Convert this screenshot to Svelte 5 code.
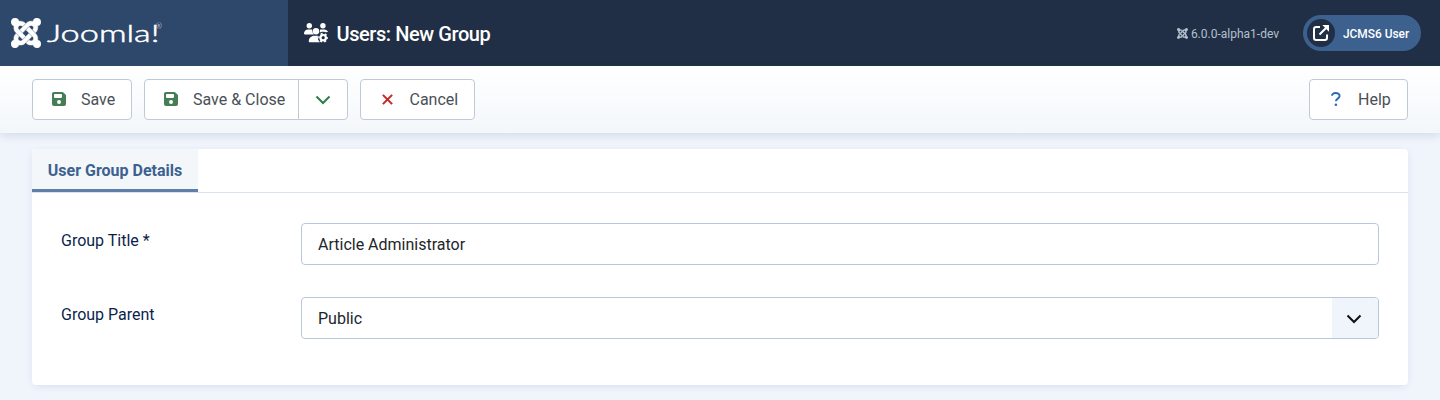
<script>
  const joomla =
    'M.6 92.1C.6 58.8 27.4 32 60.4 32c30 0 54.5 21.9 59.2 50.2 32.6-7.6 67.1.6 96.5 30l-44.3 44.3c-20.5-20.5-42.6-16.3-55.4-3.5-14.3 14.3-14.3 37.9 0 52.2l99.5 99.5-44 44.3c-87.7-87.2-49.7-49.7-99.8-99.7-26.8-26.5-35-64.8-24.8-98.9C20.4 144.6.6 120.7.6 92.1zm129.5 116.4l44.3 44.3c10-10 89.7-89.7 99.7-99.8 14.3-14.3 37.6-14.3 51.9 0 12.8 12.8 17 35-3.5 55.4l44 44.3c31.2-31.2 38.5-67.6 28.9-101.2 29.2-4.1 51.9-29.2 51.9-59.5 0-33.2-26.8-60.1-59.8-60.1-30.3 0-55.4 22.5-59.5 51.6-33.8-9.9-71.7-1.5-98.3 25.1-18.3 19.1-71.1 71.5-99.6 99.9zm266.3 152.2c8.2-32.7-.9-68.5-26.3-93.9-11.8-12.2 5 4.7-99.5-99.7l-44.3 44.3 99.7 99.7c14.3 14.3 14.3 37.6 0 51.9-12.8 12.8-35 17-55.4-3.5l-44 44.3c27.6 30.2 68 38.8 102.7 28 5.5 27.4 29.7 48.1 58.9 48.1 33 0 59.8-26.8 59.8-60.1 0-30.2-22.5-55-51.6-59.1zm-84.3-53.1l-44-44.3c-87 86.4-50.4 50.4-99.7 99.8-14.3 14.3-37.6 14.3-51.9 0-13.1-13.4-16.9-35.3 3.2-55.4l-44-44.3c-30.2 30.2-38 65.2-29.5 98.3-26.7 6-46.2 29.9-46.2 58.2C0 453.2 26.8 480 59.8 480c28.6 0 52.5-19.8 58.6-46.7 32.7 8.2 68.5-.6 94.2-26 32.1-32 12.2-12.4 99.5-99.7z';
  let title = $state('Article Administrator');
</script>

{#snippet saveIcon()}
  <svg class="save" viewBox="0 0 14 14" aria-hidden="true">
    <path fill-rule="evenodd" d="M2 0h8.2c.5 0 .9.2 1.2.5l2.1 2.1c.3.3.5.7.5 1.2V12a2 2 0 0 1-2 2H2a2 2 0 0 1-2-2V2c0-1.100.9-2 2-2zm.9 2a.9.9 0 0 0-.9.900v2.200c0 .5.4.9.9.9h6.200c.5 0 .9-.4.9-.9V2.900a.9.900 0 0 0-.9-.9zM7 8a2 2 0 1 0 0 4 2 2 0 0 0 0-4z" />
  </svg>
{/snippet}

<header>
  <div class="logo">
    <svg class="mark" viewBox="0 32 448 448"><path d={joomla} /></svg>
    <svg class="wordmark" width="116" height="34" aria-label="Joomla!">
      <text x="0" y="26" textLength="112.500" lengthAdjust="spacingAndGlyphs">Joomla!</text>
      <text class="reg" x="109" y="13">®</text>
    </svg>
  </div>
  <div class="heading">
    <svg class="users" viewBox="0 0 24 20" aria-hidden="true">
      <circle cx="5.300" cy="2.700" r="2.700" />
      <circle cx="18.900" cy="2.700" r="2.700" />
      <path d="M0 10.600c0-2.500 1.700-4.200 4-4.200h2.600c.6 0 1.200.1 1.700.4-.2 1.900.5 3.400 1.600 4.600H.8c-.5 0-.8-.3-.8-.8zM15.900 6.800c.5-.3 1.100-.4 1.700-.4h2.600c1.800 0 3.300 1.100 3.800 2.700l-2.300.2-1.500-.6h-2.600l-1.800.8z" />
      <circle cx="12" cy="8.300" r="3.200" />
      <path d="M4.800 18.300c0-3.200 2.400-5.600 5.600-5.600h2.400c.4 0 .8 0 1.200.1-.5 2 .1 4.700 2.200 6.500H5.700c-.5 0-.9-.4-.9-1z" />
      <circle class="cog-cut" cx="19.200" cy="14.700" r="5.200" />
      <circle class="teeth" cx="19.200" cy="14.700" r="4.200" />
      <circle class="cog" cx="19.200" cy="14.700" r="2.700" />
    </svg>
    <h1>Users: New Group</h1>
  </div>
  <div class="status">
    <span class="version"><svg viewBox="0 32 448 448"><path d={joomla} /></svg>6.0.0-alpha1-dev</span>
    <div class="user">
      <span class="disc">
        <svg viewBox="0 0 16 16" aria-hidden="true">
          <path class="line" d="M7 2H3.200Q1 2 1 4.200v8.600Q1 15 3.200 15h8.600q2.200 0 2.200-2.200V9.500M6.500 9.500 13 3" />
          <path d="M9.300 0H16v6.700z" />
        </svg>
      </span>
      <span class="name">JCMS6 User</span>
    </div>
  </div>
</header>

<div class="toolbar">
  <button class="btn">{@render saveIcon()}<span>Save</span></button>
  <div class="group">
    <button class="btn main">{@render saveIcon()}<span>Save &amp; Close</span></button>
    <button class="btn toggle" aria-label="More save options">
      <svg class="chevron" viewBox="0 0 16 10"><path d="M1.500 1.500 8 8l6.500-6.500" /></svg>
    </button>
  </div>
  <button class="btn cancel">
    <svg class="cross" viewBox="0 0 10 10"><path d="m.8.8 8.400 8.400M9.200.8.800 9.200" /></svg><span>Cancel</span>
  </button>
  <button class="btn help">
    <svg class="question" viewBox="0 0 10 14"><path d="M1 3.700C1 2 2.500 1 4.600 1 7 1 8.600 2.200 8.600 4c0 2.700-3.700 2.500-3.700 5.300" /><circle cx="4.900" cy="12.700" r="1.300" /></svg><span>Help</span>
  </button>
</div>

<main>
  <div class="tabs"><button class="tab">User Group Details</button></div>
  <div class="form">
    <div class="row">
      <label for="title">Group Title *</label>
      <input id="title" class="field" bind:value={title} />
    </div>
    <div class="row">
      <label for="parent">Group Parent</label>
      <div class="field select" id="parent">
        <span>Public</span>
        <span class="arrow"><svg class="chevron" viewBox="0 0 16 10"><path d="M1.500 1.500 8 8l6.500-6.500" /></svg></span>
      </div>
    </div>
  </div>
</main>

<style>
  :global(body) {
    background: #f0f4fb;
    font-family: Roboto, sans-serif;
    font-size: 16px;
    height: 400px;
    overflow: hidden;
  }
  * { box-sizing: border-box; }
  svg { display: block; flex: none; }
  button { font: inherit; margin: 0; }

  header {
    display: flex;
    height: 66px;
    background: #202f45;
    color: #fff;
  }
  .logo {
    display: flex;
    align-items: center;
    width: 288px;
    padding-left: 11px;
    background: #2d486b;
  }
  .mark { width: 30px; height: 30px; fill: #fff; stroke: #fff; stroke-width: 7; }
  .wordmark { margin-left: 6px; overflow: visible; }
  .wordmark text { font: 300 24px Lato, sans-serif; fill: #fff; stroke: #fff; stroke-width: .5; }
  .wordmark .reg { font-size: 7px; stroke: none; }
  .heading { display: flex; align-items: center; padding-left: 16px; }
  .users { width: 24px; height: 20px; fill: #fff; }
  .cog-cut { fill: #202f45; }
  .cog { fill: none; stroke: #fff; stroke-width: 2.200; }
  .teeth { fill: none; stroke: #fff; stroke-width: 1.400; stroke-dasharray: 2.200 2.198; stroke-dashoffset: 1.100; }
  h1 { margin: 0 0 0 8.500px; padding-top: 1px; font-size: 20px; font-weight: 500; line-height: 26px; letter-spacing: -.42px; }
  .status { display: flex; align-items: center; margin-left: auto; padding-right: 19px; }
  .version { display: flex; align-items: center; padding-top: 1px; font-size: 12px; color: #b4c0ce; }
  .version svg { width: 11px; height: 11px; margin-right: 3px; fill: #b4c0ce; }
  .user {
    display: flex;
    align-items: center;
    width: 118px;
    height: 36px;
    margin-left: 24px;
    padding-left: 4px;
    border-radius: 18px;
    background: #3d618f;
    font-size: 12px;
    font-weight: 500;
  }
  .name { padding-top: 2px; font-size: 11.900px; }
  .disc { display: grid; place-items: center; width: 28px; height: 28px; margin-right: 8px; border-radius: 50%; background: #202f45; }
  .disc svg { width: 16px; height: 16px; fill: #fff; }
  .disc .line { fill: none; stroke: #fff; stroke-width: 2; }

  .toolbar {
    display: flex;
    gap: 12px;
    height: 67px;
    padding: 13px 32px 0;
    background: linear-gradient(#fff, #f3f7fa);
    box-shadow: 0 3px 8px rgba(50, 85, 150, .14);
  }
  .group { display: flex; }
  .btn {
    display: flex;
    align-items: center;
    height: 41px;
    padding: 0 15.500px 0 19px;
    border: 1px solid #bfc9d8;
    border-radius: 4px;
    background: #fff;
    color: #495057;
    white-space: nowrap;
  }
  .btn:first-child:not(.main) { width: 100px; }
  .save { width: 14px; height: 14px; margin: 0 15px 1px 0; fill: #457d54; }
  .main { width: 155px; border-radius: 4px 0 0 4px; }
  .toggle { width: 50px; margin-left: -1px; padding: 0; justify-content: center; border-radius: 0 4px 4px 0; }
  .chevron { width: 16px; height: 10px; fill: none; stroke: #2f7d4b; stroke-width: 2; }
  .cancel { width: 115px; padding-left: 21px; }
  .cross { width: 11px; height: 11px; margin: 0 16.500px 1px 0; stroke: #c52827; stroke-width: 1.900; }
  .help { width: 99px; margin-left: auto; padding-left: 21px; }
  .question { width: 10px; height: 14px; margin: 0 17px 1px 0; fill: #2a69b8; }
  .question path { fill: none; stroke: #2a69b8; stroke-width: 1.900; }

  main {
    height: 236px;
    margin: 16px 32px 0;
    border-radius: 4px;
    background: #fff;
    box-shadow: 0 2px 10px -3px rgba(50, 85, 150, .2);
  }
  .tabs { height: 44px; border-bottom: 1px solid #d9e2ee; }
  .tab {
    width: 166px;
    height: 43px;
    padding: 2px 0 0;
    border: 0;
    border-bottom: 3px solid #5f7fa8;
    border-radius: 4px 0 0 0;
    background: #f3f7fa;
    color: #3d618f;
    font-weight: 700;
    white-space: nowrap;
  }
  .form { display: flex; flex-direction: column; gap: 32px; padding: 30px 29px 0; }
  .row { display: flex; height: 42px; }
  label { width: 240px; padding-top: 8px; line-height: 19px; color: #0c1f4c; }
  .field {
    flex: 1;
    height: 42px;
    padding: 0 16px;
    border: 1px solid #b7c8de;
    border-radius: 4px;
    background: #fff;
    color: #22262a;
    font: inherit;
    outline: 0;
  }
  .select { display: flex; align-items: center; justify-content: space-between; padding-right: 0; overflow: hidden; }
  .arrow { display: grid; place-items: center; width: 46px; height: 40px; padding: 2px 2px 0 0; background: #f0f4fb; }
  .arrow .chevron { stroke: #111; }
</style>
